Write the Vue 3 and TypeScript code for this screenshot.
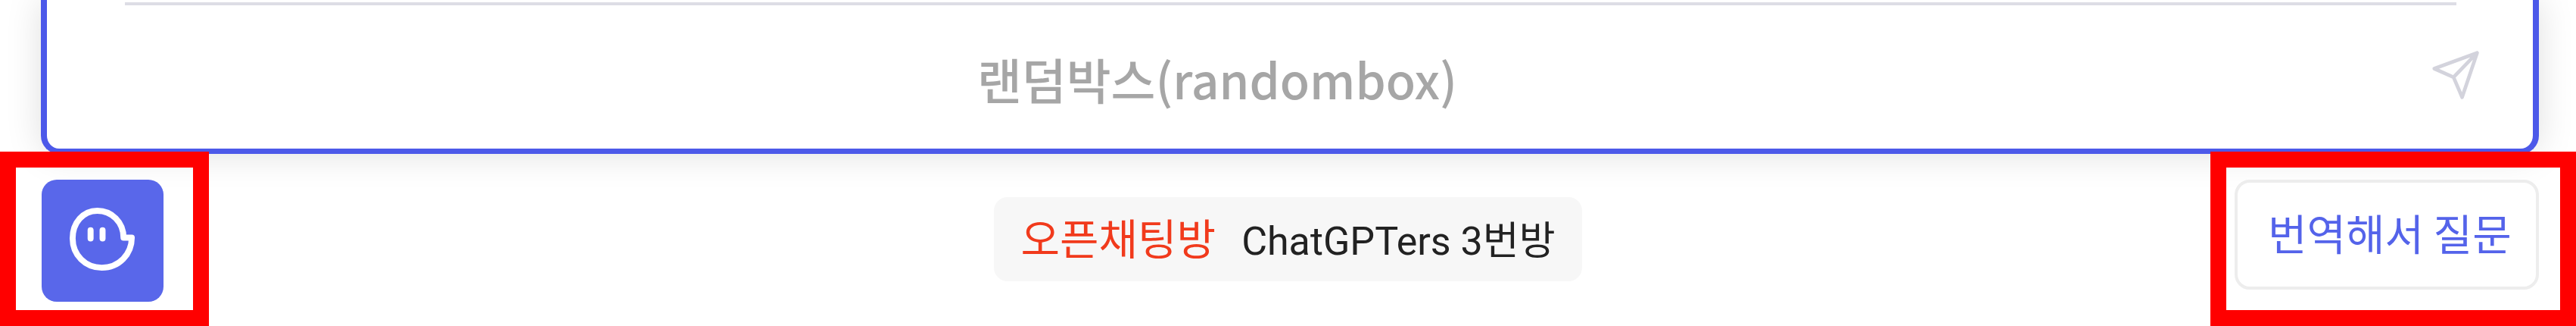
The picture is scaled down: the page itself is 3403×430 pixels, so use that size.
<script setup lang="ts">
import { ref } from 'vue'

const question = ref('')
const placeholder = '랜덤박스(randombox)'
</script>

<template>
  <main class="page">
    <form class="composer" @submit.prevent>
      <hr class="divider" />
      <div class="entry">
        <input v-model="question" class="question" type="text" :placeholder="placeholder" :aria-label="placeholder" />
        <button class="send" type="submit" aria-label="보내기">
          <svg viewBox="0 0 72 72" fill="none" stroke="#d3d3dc" stroke-width="5" stroke-linejoin="round" stroke-linecap="round">
            <path d="M65 5 5 27 32 39 44 67Z M65 5 32 39" />
          </svg>
        </button>
      </div>
    </form>

    <footer class="footer">
      <div class="mark">
        <button class="bot" type="button" aria-label="챗봇">
          <svg viewBox="0 0 90 90" fill="none" stroke="#fff" stroke-width="8" stroke-linecap="round" stroke-linejoin="round">
            <path d="M73 41C73 20 57 5 38 5C19 5 5 21 5 42C5 64 22 81 44 81C67 81 84 63 84 41Z" />
            <path d="M29 31V42M45 31V42" />
          </svg>
        </button>
      </div>

      <a class="room" href="#">
        <span class="room-kind">오픈채팅방</span>
        <span class="room-name">ChatGPTers 3번방</span>
      </a>

      <div class="mark mark-end">
        <button class="translate" type="button">번역해서 질문</button>
      </div>
    </footer>
  </main>
</template>

<style>
body {
  margin: 0;
  background: #fff;
}
</style>

<style scoped>
.page {
  overflow: hidden;
  font-family: "Noto Sans CJK KR", sans-serif;
}

.composer {
  margin: 0 49px 0 54px;
  border: solid #4c59e9;
  border-width: 0 8px 7px;
  border-radius: 0 0 24px 24px;
  box-shadow: 0 0 48px rgba(0, 0, 0, 0.13);
  padding: 3px 101px 0 103px;
  background: #fff;
}

.divider {
  margin: 0;
  border: 0;
  height: 4px;
  background: #dddde5;
}

.entry {
  display: flex;
  align-items: flex-start;
  height: 189px;
  margin-right: -34px;
}

.question {
  flex: 1;
  min-width: 0;
  margin: 48px 0 0;
  padding: 0 160px 0 0;
  border: 0;
  outline: 0;
  background: transparent;
  font: 500 64px/96px "Noto Sans CJK KR", sans-serif;
  text-align: center;
  color: #333;
}

.question::placeholder {
  color: #a6a6a6;
  opacity: 1;
}

.send {
  width: 68px;
  height: 68px;
  margin-top: 58px;
  padding: 0;
  border: 0;
  background: transparent;
}

.send svg,
.bot svg {
  display: block;
  width: 100%;
  height: 100%;
}

.footer {
  display: flex;
  justify-content: space-between;
  align-items: flex-start;
  margin-top: -3px;
}

.mark {
  position: relative;
  box-sizing: border-box;
  width: 276px;
  height: 230px;
  border: 21px solid #f00;
  padding: 16px 34px;
}

.mark-end {
  width: 483px;
  padding: 16px 28px 16px 11px;
}

.bot {
  display: block;
  width: 161px;
  height: 161px;
  border: 0;
  border-radius: 20px;
  padding: 36px;
  background: #5967ea;
}

.room {
  display: flex;
  align-items: baseline;
  gap: 34px;
  margin-top: 60px;
  margin-left: 207px;
  border-radius: 18px;
  padding: 0 36px;
  background: #f7f7f7;
  color: #222;
  font-size: 52px;
  line-height: 104px;
  text-decoration: none;
}

.room-kind {
  color: #f13a1c;
  font-size: 56px;
}

.room-name {
  font-family: Roboto, "Noto Sans CJK KR", sans-serif;
}

.translate {
  display: block;
  width: 100%;
  height: 145px;
  border: 4px solid #ededed;
  border-radius: 20px;
  padding: 0 40px 8px;
  background: #fff;
  color: #5463ea;
  font: 400 56px/120px "Noto Sans CJK KR", sans-serif;
  white-space: nowrap;
}
</style>
